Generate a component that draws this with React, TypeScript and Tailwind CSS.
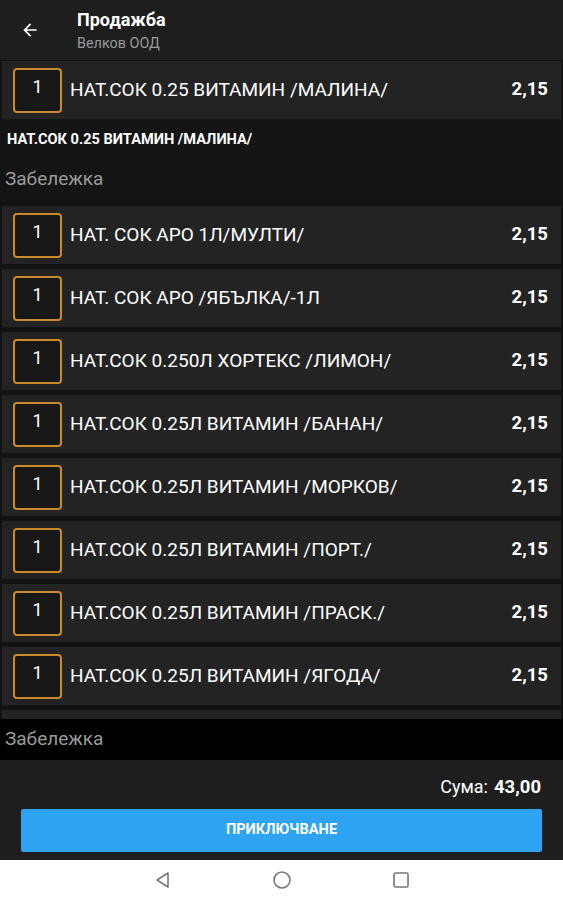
import React from "react";

const items = [
  "НАТ. СОК АРО 1Л/МУЛТИ/",
  "НАТ. СОК АРО /ЯБЪЛКА/-1Л",
  "НАТ.СОК 0.250Л ХОРТЕКС /ЛИМОН/",
  "НАТ.СОК 0.25Л ВИТАМИН /БАНАН/",
  "НАТ.СОК 0.25Л ВИТАМИН /МОРКОВ/",
  "НАТ.СОК 0.25Л ВИТАМИН /ПОРТ./",
  "НАТ.СОК 0.25Л ВИТАМИН /ПРАСК./",
  "НАТ.СОК 0.25Л ВИТАМИН /ЯГОДА/",
];

function Row({ name, price }: { name: string; price: string }) {
  return (
    <div className="mx-[2px] h-[58px] shrink-0 bg-[#232323] flex items-center">
      <div className="ml-[11px] w-[49px] h-[45px] border-2 border-[#c98a2b] rounded-[4px] bg-[#171717] flex items-center justify-center">
        <span className="text-[18px] text-white -mt-[7px]">1</span>
      </div>
      <span className="ml-[8px] text-[19px] text-white flex-1 truncate">{name}</span>
      <span className="mr-[13px] text-[18.5px] font-bold text-white">{price}</span>
    </div>
  );
}

export default function App() {
  return (
    <div
      className="w-[563px] h-[900px] flex flex-col bg-[#141414] overflow-hidden"
      style={{ fontFamily: "Roboto, 'Liberation Sans', sans-serif" }}
    >
      {/* Header */}
      <div className="h-[60px] shrink-0 bg-[#1e1e1e] flex items-center">
        <svg className="ml-[20px]" width="20" height="20" viewBox="0 0 24 24" fill="none">
          <path d="M20 11H7.83l5.59-5.59L12 4l-8 8 8 8 1.41-1.41L7.83 13H20v-2z" fill="#fff" />
        </svg>
        <div className="ml-[37px] flex flex-col mt-[3px]">
          <span className="text-[18px] font-bold text-white leading-[20px]">Продажба</span>
          <span className="text-[14.4px] text-[#9a9a9a] leading-[18px] mt-[5px]">Велков ООД</span>
        </div>
      </div>

      <div className="h-[1px] shrink-0 bg-[#111]" />
      <Row name="НАТ.СОК 0.25 ВИТАМИН /МАЛИНА/" price="2,15" />

      <div className="h-[82px] shrink-0 flex flex-col">
        <span className="mt-[10px] ml-[7px] text-[14.6px] font-bold text-white">НАТ.СОК 0.25 ВИТАМИН /МАЛИНА/</span>
        <span className="mt-[14px] ml-[5px] text-[19px] text-[#9a9a9a]">Забележка</span>
      </div>

      {/* List */}
      <div className="h-[518px] shrink-0 overflow-hidden flex flex-col gap-[5px] pt-[5px] bg-[#121212]">
        {items.map((n, i) => (
          <Row key={i} name={n} price="2,15" />
        ))}
        <div className="mx-[2px] h-[58px] shrink-0 bg-[#232323]" />
      </div>

      {/* Note */}
      <div className="h-[41px] shrink-0 bg-black flex items-center">
        <span className="ml-[5px] text-[19px] text-[#9a9a9a]">Забележка</span>
      </div>

      {/* Bottom */}
      <div className="h-[100px] shrink-0 bg-[#1e1e1e] flex flex-col">
        <div className="mt-[13px] mr-[22px] flex justify-end items-baseline gap-[6px] text-white">
          <span className="text-[18px]">Сума:</span>
          <span className="text-[18.5px] font-bold">43,00</span>
        </div>
        <button className="mt-[7px] mx-[21px] h-[43px] bg-[#2ea3f2] rounded-[2px] text-white text-[14.6px] font-bold">
          ПРИКЛЮЧВАНЕ
        </button>
      </div>

      {/* Nav */}
      <div className="flex-1 bg-white flex items-center justify-center">
        <div className="flex items-center gap-[100px]">
          <svg width="18" height="18" viewBox="0 0 18 18" fill="none">
            <path d="M14 2 L3 9 L14 16 Z" stroke="#777" strokeWidth="1.6" strokeLinejoin="round" />
          </svg>
          <svg width="20" height="20" viewBox="0 0 20 20" fill="none">
            <circle cx="10" cy="10" r="8" stroke="#777" strokeWidth="1.6" />
          </svg>
          <svg width="18" height="18" viewBox="0 0 18 18" fill="none">
            <rect x="2" y="2" width="14" height="14" rx="1.5" stroke="#777" strokeWidth="1.6" />
          </svg>
        </div>
      </div>
    </div>
  );
}
